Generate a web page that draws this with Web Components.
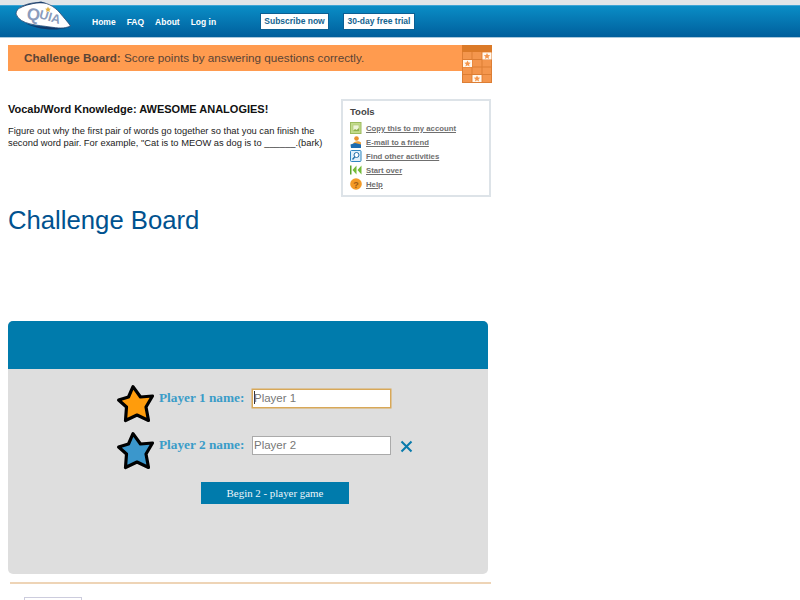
<!DOCTYPE html>
<html>
<head>
<meta charset="utf-8">
<title>Challenge Board</title>
<style>
  html, body { margin: 0; padding: 0; background: #fff; overflow: hidden; height: 600px; }
  body { font-family: "Liberation Sans", Arial, sans-serif; }
</style>
</head>
<body>
<quia-header></quia-header>
<challenge-banner><b>Challenge Board:</b> Score points by answering questions correctly.</challenge-banner>
<activity-intro></activity-intro>
<game-panel></game-panel>
<page-footer></page-footer>

<script>
function el(html) {
  const template = document.createElement('template');
  template.innerHTML = html;
  return template.content.cloneNode(true);
}

class QuiaHeader extends HTMLElement {
  constructor() {
    super();
    this.attachShadow({ mode: 'open' }).appendChild(el(`
      <style>
        :host { display: block; height: 38px; background: #e1e5e8; position: relative; }
        .bar {
          position: absolute; left: 0; right: 0; top: 5px; height: 31px;
          border-top: 1px solid #3ea4d4;
          background: linear-gradient(#0a8dc6, #005f9c);
          display: flex; align-items: center; padding-left: 92px;
          font: bold 8.5px "Liberation Sans", sans-serif;
        }
        .fade { position: absolute; left: 0; right: 0; top: 37px; height: 1px; background: #a9c8dc; }
        nav { display: flex; gap: 11px; width: 168px; }
        a { color: #fff; text-decoration: none; white-space: nowrap; }
        .btn {
          background: #fff; color: #14648f; height: 15px; line-height: 15px; text-align: center;
          border: 1px solid #0b5f93; margin-right: 14px;
        }
        svg { position: absolute; left: 14px; top: 0; }
      </style>
      <div class="bar">
        <nav><a>Home</a><a>FAQ</a><a>About</a><a>Log in</a></nav>
        <a class="btn" style="width:67px">Subscribe now</a>
        <a class="btn" style="width:70px">30-day free trial</a>
      </div>
      <div class="fade"></div>
      <svg width="60" height="32" viewBox="0 0 60 32">
        <path d="M8 21C16 27 28 26 36 27C44 28 50 30 57 26L52 28C42 31 20 30 8 21Z" fill="#12396a"/>
        <path d="M2 14C2 8 10 4 22 2.500C32 1.500 40 6 46 13C50 18 54 22 56.500 26C50 29 44 28 36 27C24 25 6 25 2 14Z" fill="#fff" stroke="#2a4a74" stroke-width=".8"/>
        <path d="M5 9C9 5 15 3.500 20 3L27 1.500L33 3.500C26 2.500 12 4 5 9Z" fill="#1c3f6b"/>
        <path d="M34 6.500l.9 1.900 2 .3-1.400 1.300.3 2-1.800-1-1.800 1 .3-2-1.400-1.300 2-.3z" fill="#e0b040"/>
        <text x="12" y="19" font-family="Liberation Sans, sans-serif" font-weight="bold" font-size="17" fill="#8a9cbc" transform="rotate(10 12 19)">Q</text>
        <text x="24.500" y="18" font-family="Liberation Sans, sans-serif" font-weight="bold" font-size="12.500" fill="#8a9cbc" transform="rotate(16 24.500 18)">UIA</text>
      </svg>
    `));
  }
}
customElements.define('quia-header', QuiaHeader);

class ChallengeBanner extends HTMLElement {
  constructor() {
    super();
    this.attachShadow({ mode: 'open' }).appendChild(el(`
      <style>
        :host { display: block; position: relative; margin: 7px 0 0 8px; width: 484px; height: 37px; }
        .strip {
          height: 26px; background: #ff9b4f; color: #5a4436; box-sizing: border-box;
          padding-left: 16px; font: 11.7px/26px "Liberation Sans", sans-serif;
        }
        svg { position: absolute; right: 0; top: 0; }
      </style>
      <div class="strip"><slot></slot></div>
      <svg width="30" height="38" viewBox="0 0 30 38">
        <defs>
          <g id="cell">
            <rect width="9" height="7" fill="#fff8ee"/>
            <path d="M4.500 .6l1 2 2.200.2-1.700 1.400.6 2.200-2.100-1.200-2.100 1.200.6-2.200L1.300 2.800l2.200-.2z" fill="#f4964d"/>
          </g>
        </defs>
        <rect width="30" height="38" fill="#f4964d"/>
        <rect width="30" height="7" fill="#db7a28"/>
        <path d="M.5 7V38M10 7V38M20 7V38M29.500 7V38M0 14.500H30M0 22H30M0 29.500H30M0 37.500H30" stroke="#dd7e34" stroke-width="1" fill="none"/>
        <use href="#cell" x="20.500" y="7.500"/>
        <use href="#cell" x="1" y="15"/>
        <use href="#cell" x="10.500" y="30"/>
      </svg>
    `));
  }
}
customElements.define('challenge-banner', ChallengeBanner);

class ToolLink extends HTMLElement {
  constructor() {
    super();
    this.attachShadow({ mode: 'open' }).appendChild(el(`
      <style>
        :host { display: flex; align-items: center; gap: 4px; height: 14px; }
        ::slotted(svg) { display: block; flex: none; }
        span { font: bold 7.75px "Liberation Sans", sans-serif; color: #6f6f6f; text-decoration: underline; white-space: nowrap; }
      </style>
      <slot name="icon"></slot>
      <span><slot></slot></span>
    `));
  }
}
customElements.define('tool-link', ToolLink);

class ToolsBox extends HTMLElement {
  constructor() {
    super();
    this.attachShadow({ mode: 'open' }).appendChild(el(`
      <style>
        :host {
          display: block; width: 150px; height: 98px; box-sizing: border-box;
          border: 2px solid #dde3e8; padding: 5px 0 0 7px; background: #fff;
        }
        h4 { margin: 0 0 3px; font: bold 9.5px/12px "Liberation Sans", sans-serif; color: #444; }
        .list { display: flex; flex-direction: column; }
      </style>
      <h4>Tools</h4>
      <div class="list">
        <tool-link>
          <svg slot="icon" width="12" height="12" viewBox="0 0 12 12"><rect x=".5" y=".5" width="10.500" height="11" fill="#c3dc8c" stroke="#9dbb5e"/><rect x="3" y="3" width="6" height="6" fill="#eef5d8" stroke="#a9c46e" stroke-width=".6"/><path d="M3 9l2-2 1.500 1L9 6v3z" fill="#8fb04c"/></svg>
          Copy this to my account</tool-link>
        <tool-link>
          <svg slot="icon" width="12" height="12" viewBox="0 0 12 12"><circle cx="6.500" cy="2.500" r="2.300" fill="#e8912f"/><path d="M3 8c.5-3 6-3.500 8-1.500V9H3z" fill="#f0a23e"/><path d="M.5 8.500L5 7l6 1.500V12H1z" fill="#1f6cb2"/></svg>
          E-mail to a friend</tool-link>
        <tool-link>
          <svg slot="icon" width="12" height="12" viewBox="0 0 12 12"><rect x=".5" y=".5" width="10.500" height="11" rx="1" fill="#dff0fa" stroke="#2f86c0"/><circle cx="6.500" cy="5" r="2.500" fill="#fff" stroke="#1f6ea8"/><path d="M4.700 7L2.500 9.500" stroke="#1f6ea8" stroke-width="1.300"/></svg>
          Find other activities</tool-link>
        <tool-link>
          <svg slot="icon" width="12" height="12" viewBox="0 0 12 12"><rect x="0" y="1.500" width="1.500" height="9" fill="#5da52c"/><path d="M6.500 1.500v9L2.500 6zM11.500 1.500v9L7.500 6z" fill="#74bb38"/></svg>
          Start over</tool-link>
        <tool-link>
          <svg slot="icon" width="12" height="12" viewBox="0 0 12 12"><circle cx="6" cy="6" r="5.800" fill="#f39a26"/><text x="6" y="9.500" text-anchor="middle" font-family="Liberation Sans, sans-serif" font-weight="bold" font-size="9" fill="#a05a14">?</text></svg>
          Help</tool-link>
      </div>
    `));
  }
}
customElements.define('tools-box', ToolsBox);

class ActivityIntro extends HTMLElement {
  constructor() {
    super();
    this.attachShadow({ mode: 'open' }).appendChild(el(`
      <style>
        :host { display: block; margin: 17px 0 0 8px; width: 484px; height: 222px; color: #222; }
        .row { display: flex; justify-content: space-between; align-items: flex-start; width: 483px; }
        .text { width: 325px; padding-top: 3px; }
        h3 { margin: 0 0 9px; font: bold 11px/14px "Liberation Sans", sans-serif; color: #111; }
        p { margin: 0; font: 9.35px/12px "Liberation Sans", sans-serif; white-space: nowrap; }
        h1 { margin: 7px 0 0; font: 25.7px/32px "Liberation Sans", sans-serif; color: #00528f; }
      </style>
      <div class="row">
        <div class="text">
          <h3>Vocab/Word Knowledge: AWESOME ANALOGIES!</h3>
          <p>Figure out why the first pair of words go together so that you can finish the<br>second word pair. For example, "Cat is to MEOW as dog is to ______.(bark)</p>
        </div>
        <tools-box></tools-box>
      </div>
      <h1>Challenge Board</h1>
    `));
  }
}
customElements.define('activity-intro', ActivityIntro);

class PlayerRow extends HTMLElement {
  constructor() {
    super();
    const n = this.getAttribute('n');
    const color = this.getAttribute('color');
    this.attachShadow({ mode: 'open' }).appendChild(el(`
      <style>
        :host { display: flex; align-items: center; height: 40px; position: relative; }
        label { font: bold 13.3px "Liberation Serif", serif; color: #3a9cc8; width: 93px; white-space: nowrap; }
        .box {
          width: 139px; height: 19px; box-sizing: border-box; background: #fff;
          border: 1px solid #aaa; font: 11.5px/17px "Liberation Sans", sans-serif; color: #777; padding-left: 1px;
        }
        :host([focused]) .box { border: 1px solid #d8a858; box-shadow: 0 0 0 .5px #d8a858; }
        :host([focused]) .box::before { content: ""; display: inline-block; width: 1px; height: 13px; margin-right: -1px; background: #333; vertical-align: -2px; }
        svg.star { flex: none; margin-right: 2px; transform: translateY(5px); }
        svg.x { position: absolute; left: 284px; top: 15px; }
      </style>
      <svg class="star" width="41" height="44" viewBox="0 0 41 44">
        <path d="M17 5.600L24.500 16L36.500 15L30 26L32.500 39.500L21 34L9.500 39.500L10.500 26L2.600 19L12.500 16Z" fill="${color}" stroke="#000" stroke-width="3.200" stroke-linejoin="round"/>
      </svg>
      <label>Player ${n} name:</label>
      <div class="box">Player ${n}</div>
      ${this.hasAttribute('close') ? '<svg class="x" width="13" height="13" viewBox="0 0 13 13"><path d="M1.500 1.500L11.500 11.500M11.500 1.500L1.500 11.500" stroke="#0a7bac" stroke-width="2.100" fill="none"/></svg>' : ''}
    `));
  }
}
customElements.define('player-row', PlayerRow);

class GamePanel extends HTMLElement {
  constructor() {
    super();
    this.attachShadow({ mode: 'open' }).appendChild(el(`
      <style>
        :host {
          display: block; margin: 0 0 0 8px; width: 480px; height: 253px;
          background: #dedede; border-radius: 5px; overflow: hidden;
        }
        .top { height: 48px; background: #007bac; }
        .form { padding: 9px 0 0 108px; display: flex; flex-direction: column; gap: 7px; }
        button {
          display: block; margin: 10px 0 0 85px; width: 148px; height: 22px; border: 0; padding: 0;
          background: #007bac; color: #eef6fa; font: 10.9px "Liberation Serif", serif;
        }
      </style>
      <div class="top"></div>
      <div class="form">
        <player-row n="1" color="#ff9c0c" focused></player-row>
        <player-row n="2" color="#3b97cc" close></player-row>
        <button>Begin 2 - player game</button>
      </div>
    `));
  }
}
customElements.define('game-panel', GamePanel);

class PageFooter extends HTMLElement {
  constructor() {
    super();
    this.attachShadow({ mode: 'open' }).appendChild(el(`
      <style>
        :host { display: block; margin: 8px 0 0 10px; width: 481px; }
        .rule { height: 2px; background: #eed4b6; }
        .tab { width: 58px; height: 10px; margin: 13px 0 0 14px; border: 1px solid #ccd; border-bottom: 0; box-sizing: border-box; }
      </style>
      <div class="rule"></div>
      <div class="tab"></div>
    `));
  }
}
customElements.define('page-footer', PageFooter);
</script>
</body>
</html>
